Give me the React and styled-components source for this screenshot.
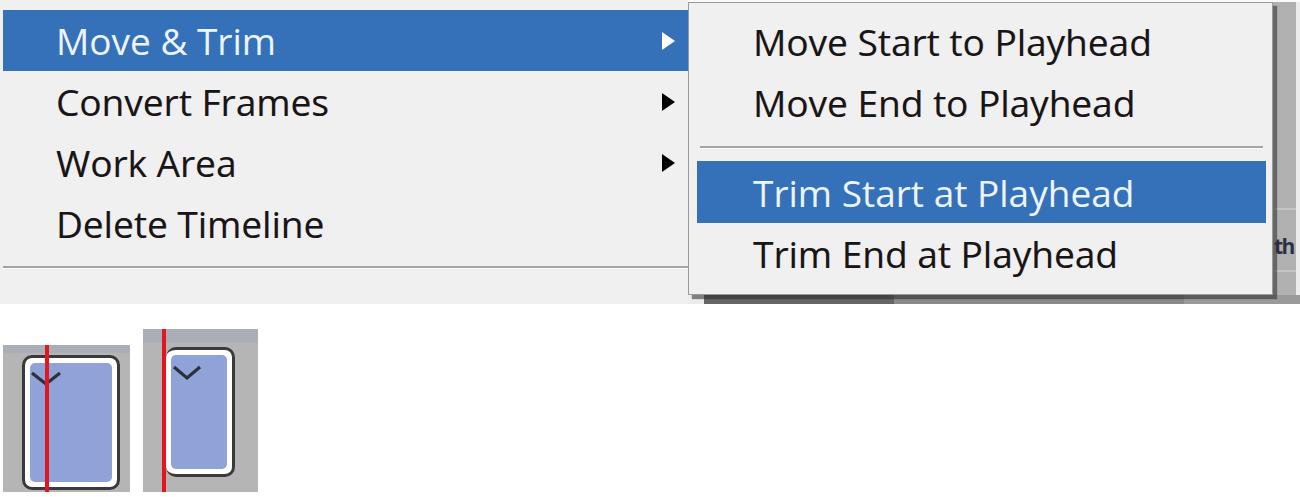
import React from "react";
import styled, { createGlobalStyle } from "styled-components";

const Global = createGlobalStyle`
  html, body { margin: 0; padding: 0; background: #fff; }
  body { font-family: "Open Sans", "Noto Sans", sans-serif; }
`;

const Page = styled.div`
  width: 1300px;
  height: 497px;
  display: flex;
  flex-direction: column;
  overflow: hidden;
`;

const Top = styled.div`
  display: flex;
  height: 304px;
  flex-shrink: 0;
`;

const MainMenu = styled.div`
  width: 688px;
  flex-shrink: 0;
  background: #f0f0f0;
  padding-top: 10px;
  box-sizing: border-box;
  display: flex;
  flex-direction: column;
`;

const Row = styled.div`
  height: ${p => p.$h || 61}px;
  flex-shrink: 0;
  display: flex;
  align-items: center;
  justify-content: space-between;
  box-sizing: border-box;
  margin-left: ${p => p.$ml || 3}px;
  margin-right: ${p => p.$mr || 0}px;
  padding-left: ${p => p.$pl || 53}px;
  padding-right: 13px;
  font-size: 37px;
  white-space: nowrap;
  color: ${p => (p.$active ? "#eef4ff" : "#161616")};
  background: ${p => (p.$active ? "#3571b8" : "transparent")};
  text-shadow: ${p => (p.$active ? "none" : "0.5px 0 0 rgba(90,0,40,0.35)")};
`;

const Arrow = styled.span`
  width: 0;
  height: 0;
  border-top: 9px solid transparent;
  border-bottom: 9px solid transparent;
  border-left: 13px solid ${p => (p.$light ? "#ffffff" : "#000")};
`;

const Sep = styled.div`
  height: ${p => p.$h}px;
  flex-shrink: 0;
  display: flex;
  align-items: center;
  margin: 0 ${p => p.$mr || 0}px 0 ${p => p.$ml || 0}px;
  &::after {
    content: "";
    flex: 1;
    height: 2px;
    background: #a4a4a4;
    box-shadow: 0 1px 0 #fff;
  }
`;

const RightPane = styled.div`
  width: 612px;
  flex-shrink: 0;
  display: flex;
  flex-direction: column;
  padding-top: 2px;
  box-sizing: border-box;
  background: linear-gradient(#fafafa 0 2px, #ececec 2px);
`;

const SubRow = styled.div`
  display: flex;
  height: 293px;
`;

const SubMenu = styled.div`
  width: 585px;
  flex-shrink: 0;
  box-sizing: border-box;
  background: #f0f0f0;
  border: 1px solid #9a9a9a;
  box-shadow: 4px 4px 1px rgba(40, 40, 40, 0.55);
  padding-top: 8px;
  position: relative;
  z-index: 1;
  display: flex;
  flex-direction: column;
`;

const Backdrop = styled.div`
  width: 23px;
  flex-shrink: 0;
  background: #b1b1b1;
  display: flex;
  flex-direction: column;
  overflow: hidden;
`;

const BackLine = styled.div`
  height: 2px;
  flex-shrink: 0;
  background: #c6c6c6;
  margin-top: ${p => p.$mt}px;
`;

const BackLabel = styled.div`
  height: 60px;
  flex-shrink: 0;
  display: flex;
  align-items: center;
  padding: 12px 0 0 1px;
  box-sizing: border-box;
  font-weight: 700;
  font-size: 21px;
  color: #2a3140;
  letter-spacing: -1.5px;
  white-space: nowrap;
`;

const BottomStrip = styled.div`
  height: 9px;
  margin-left: 16px;
  background: linear-gradient(90deg, #666 0 190px, #8a8a8a 190px 480px, #9a9a9a 480px);
`;

const Thumbs = styled.div`
  flex: 1;
  display: flex;
  align-items: flex-end;
  gap: 13px;
  padding: 0 0 5px 3px;
`;

const Thumb = styled.div`
  position: relative;
  width: ${p => p.$w}px;
  height: ${p => p.$h}px;
  box-sizing: border-box;
  background: linear-gradient(#a9aeb9 0 ${p => p.$band}px, #b5b5b5 ${p => p.$band}px);
  padding: ${p => p.$pt}px 0 0 ${p => p.$pl}px;
`;

const Card = styled.div`
  width: ${p => p.$w}px;
  height: ${p => p.$h}px;
  box-sizing: border-box;
  border: 3px solid #3a3a3a;
  border-left-width: ${p => (p.$noLeft ? 0 : 3)}px;
  border-radius: 10px;
  background: #fff;
  padding: 5px;
  display: flex;
`;

const Fill = styled.div`
  flex: 1;
  background: #8fa3d9;
  border-radius: 5px;
  padding: ${p => p.$t}px 0 0 ${p => p.$l}px;
`;

const Playhead = styled.div`
  position: absolute;
  top: 0;
  bottom: 0;
  left: ${p => p.$x}px;
  width: 4px;
  background: #e3161f;
`;

const Chevron = ({ w }) => (
  <svg width={w + 4} height="16" viewBox={`0 0 ${w + 4} 16`} style={{ display: "block" }}>
    <polyline
      points={`2,2 ${w / 2 + 2},13 ${w + 2},2`}
      fill="none"
      stroke="#2c3038"
      strokeWidth="3.2"
    />
  </svg>
);

export default function App() {
  return (
    <Page>
      <Global />
      <Top>
        <MainMenu>
          <Row $active>
            Move &amp; Trim <Arrow $light />
          </Row>
          <Row>
            Convert Frames <Arrow />
          </Row>
          <Row>
            Work Area <Arrow />
          </Row>
          <Row>Delete Timeline</Row>
          <Sep $h={26} $ml={3} />
        </MainMenu>
        <RightPane>
          <SubRow>
            <SubMenu>
              <Row $ml={8} $mr={6} $pl={56}>Move Start to Playhead</Row>
              <Row $ml={8} $mr={6} $pl={56}>Move End to Playhead</Row>
              <Sep $h={28} $ml={11} $mr={9} />
              <Row $ml={8} $mr={6} $pl={56} $h={62} $active>
                Trim Start at Playhead
              </Row>
              <Row $ml={8} $mr={6} $pl={56}>Trim End at Playhead</Row>
            </SubMenu>
            <Backdrop>
              <BackLine $mt={206} />
              <BackLabel>th</BackLabel>
              <BackLine $mt={0} />
            </Backdrop>
          </SubRow>
          <BottomStrip />
        </RightPane>
      </Top>
      <Thumbs>
        <Thumb $w={127} $h={147} $band={8} $pt={10} $pl={19}>
          <Card $w={98} $h={135}>
            <Fill $t={8} $l={0}>
              <Chevron w={28} />
            </Fill>
          </Card>
          <Playhead $x={42} />
        </Thumb>
        <Thumb $w={115} $h={163} $band={14} $pt={18} $pl={23}>
          <Card $w={69} $h={130} $noLeft>
            <Fill $t={10} $l={1}>
              <Chevron w={26} />
            </Fill>
          </Card>
          <Playhead $x={19} />
        </Thumb>
      </Thumbs>
    </Page>
  );
}
